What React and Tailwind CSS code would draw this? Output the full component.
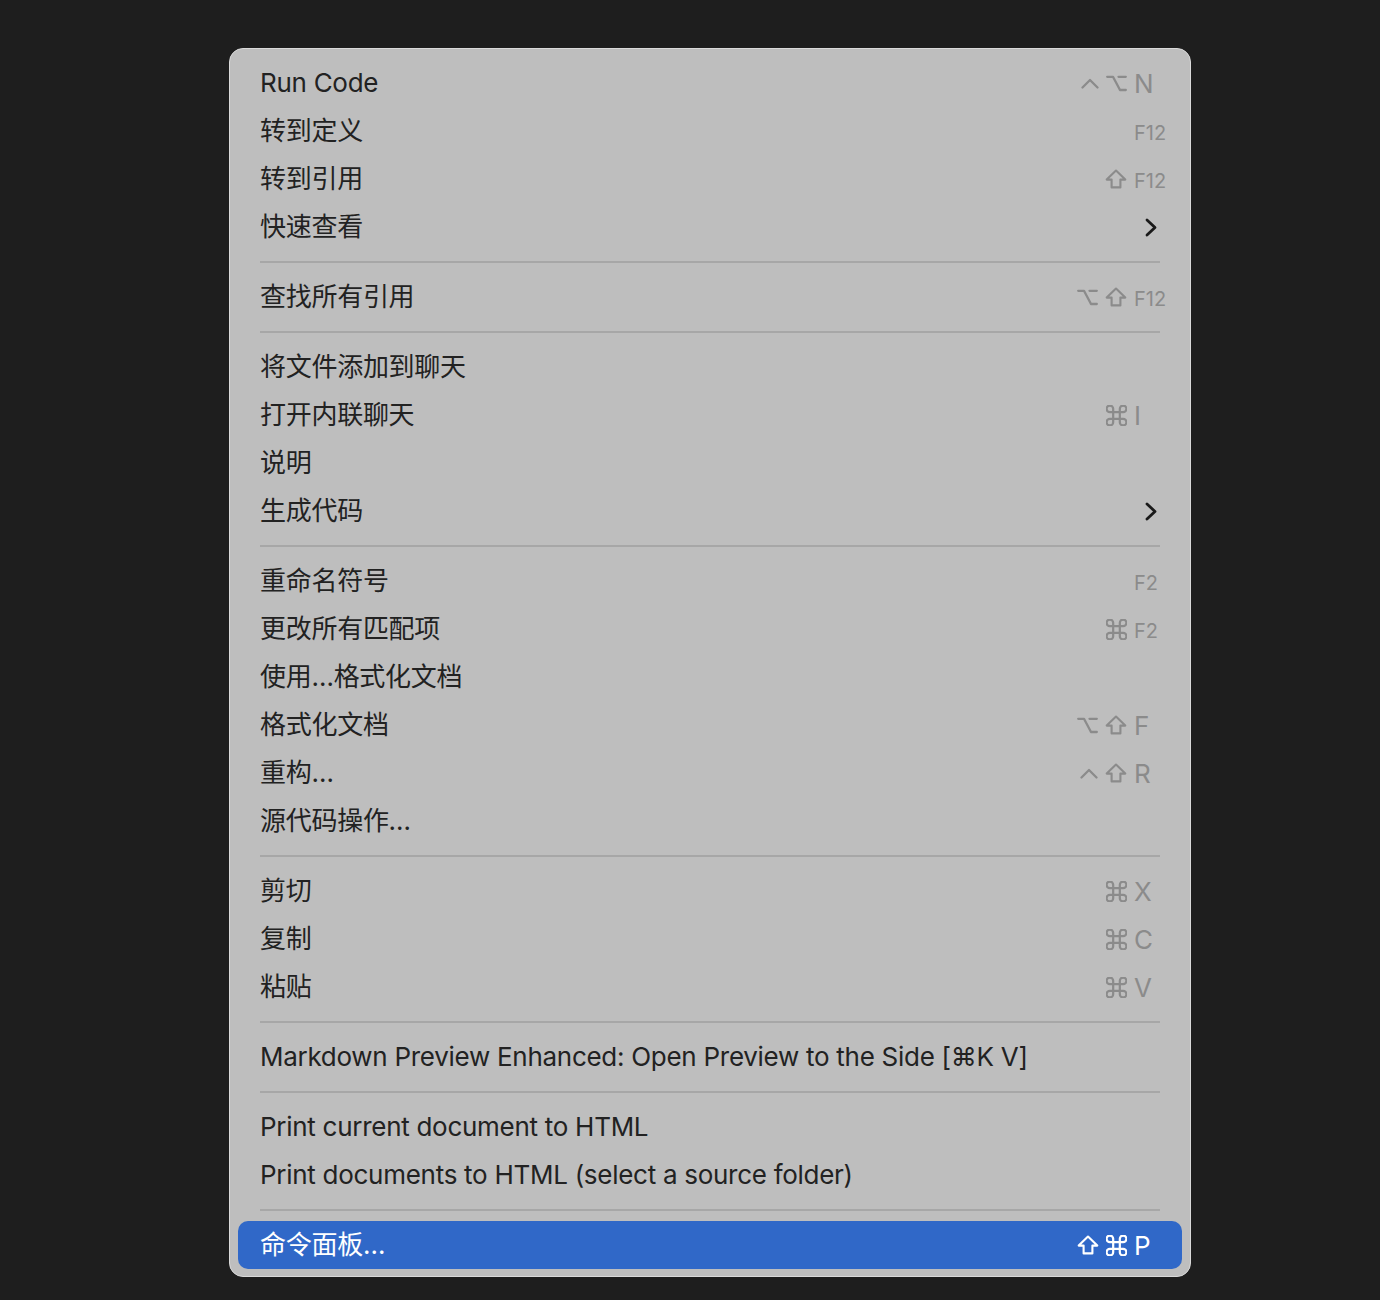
import React from "react";

const Ctrl = () => (
  <svg width="18" height="11" viewBox="0 0 18 11" fill="none" stroke="currentColor" strokeWidth="2.3" strokeLinecap="round" strokeLinejoin="round">
    <polyline points="1.5,9.5 9,2 16.5,9.5" />
  </svg>
);
const Opt = () => (
  <svg width="21" height="17" viewBox="0 0 21 17" fill="none" stroke="currentColor" strokeWidth="2.3" strokeLinecap="round" strokeLinejoin="round">
    <path d="M1.2 1.8 H7 L14 15 H19.8 M12.5 1.8 H19.8" />
  </svg>
);
const Shift = () => (
  <svg width="22" height="20" viewBox="0 0 22 20" fill="none" stroke="currentColor" strokeWidth="2.1" strokeLinejoin="round">
    <path d="M11 1.6 L20.3 10.6 H15.4 V18.4 H6.6 V10.6 H1.7 Z" />
  </svg>
);
const Cmd = () => (
  <svg width="21" height="21" viewBox="2.5 2.5 19 19" fill="none" stroke="currentColor" strokeWidth="2" strokeLinecap="round" strokeLinejoin="round">
    <path d="M15 6v12a3 3 0 1 0 3-3H6a3 3 0 1 0 3 3V6a3 3 0 1 0-3 3h12a3 3 0 1 0-3-3" />
  </svg>
);
const Chevron = () => (
  <svg width="12" height="19" viewBox="0 0 12 19" fill="none" stroke="currentColor" strokeWidth="2.8" strokeLinecap="round" strokeLinejoin="round">
    <polyline points="2,2 10,9.5 2,17" />
  </svg>
);

const MOD = { ctrl: Ctrl, opt: Opt, shift: Shift, cmd: Cmd };

const Sep = () => <div className="mx-[22px] my-[10px] h-[2px] bg-[#a7a7a7]" />;

function Row({ label, mods = [], keyText, fkey, sub, active }) {
  return (
    <div
      className={
        "flex h-[48px] items-center px-[22px] " +
        (active ? "rounded-[10px] bg-[#3068c8] text-white" : "text-[#222222]")
      }
    >
      <div className="flex-1 whitespace-nowrap text-[26px] leading-none tracking-[-0.28px]">{label}</div>
      {sub && (
        <div className="mr-[3px] flex items-center text-[#1a1a1a]">
          <Chevron />
        </div>
      )}
      {(mods.length > 0 || keyText) && (
        <div className={"flex items-center " + (active ? "text-white" : "text-[#8b8b8b]")}>
          <div className="flex items-center gap-[7px]">
            {mods.map((m, i) => {
              const C = MOD[m];
              return <C key={i} />;
            })}
          </div>
          <div className="ml-[7px] flex w-[26px] items-center whitespace-nowrap">
            {keyText && (
              <span
                className={
                  fkey
                    ? "mt-[4px] text-[20px] leading-none"
                    : "mt-[2px] text-[26px] leading-none"
                }
              >
                {keyText}
              </span>
            )}
          </div>
        </div>
      )}
    </div>
  );
}

export default function App() {
  return (
    <div
      className="min-h-screen bg-[#1e1e1e] pl-[229px] pt-[48px]"
      style={{ fontFamily: 'Inter, "Noto Sans CJK SC", sans-serif' }}
    >
      <div className="w-[962px] rounded-[14px] border border-[#dadada] bg-[#bebebe] px-[8px] pb-[7px] pt-[10px]">
        <Row label="Run Code" mods={["ctrl", "opt"]} keyText="N" />
        <Row label="转到定义" keyText="F12" fkey />
        <Row label="转到引用" mods={["shift"]} keyText="F12" fkey />
        <Row label="快速查看" sub />
        <Sep />
        <Row label="查找所有引用" mods={["opt", "shift"]} keyText="F12" fkey />
        <Sep />
        <Row label="将文件添加到聊天" />
        <Row label="打开内联聊天" mods={["cmd"]} keyText="I" />
        <Row label="说明" />
        <Row label="生成代码" sub />
        <Sep />
        <Row label="重命名符号" keyText="F2" fkey />
        <Row label="更改所有匹配项" mods={["cmd"]} keyText="F2" fkey />
        <Row label="使用…格式化文档" />
        <Row label="格式化文档" mods={["opt", "shift"]} keyText="F" />
        <Row label="重构…" mods={["ctrl", "shift"]} keyText="R" />
        <Row label="源代码操作…" />
        <Sep />
        <Row label="剪切" mods={["cmd"]} keyText="X" />
        <Row label="复制" mods={["cmd"]} keyText="C" />
        <Row label="粘贴" mods={["cmd"]} keyText="V" />
        <Sep />
        <Row label="Markdown Preview Enhanced: Open Preview to the Side [⌘K V]" />
        <Sep />
        <Row label="Print current document to HTML" />
        <Row label="Print documents to HTML (select a source folder)" />
        <Sep />
        <Row label="命令面板…" mods={["shift", "cmd"]} keyText="P" active />
      </div>
    </div>
  );
}
